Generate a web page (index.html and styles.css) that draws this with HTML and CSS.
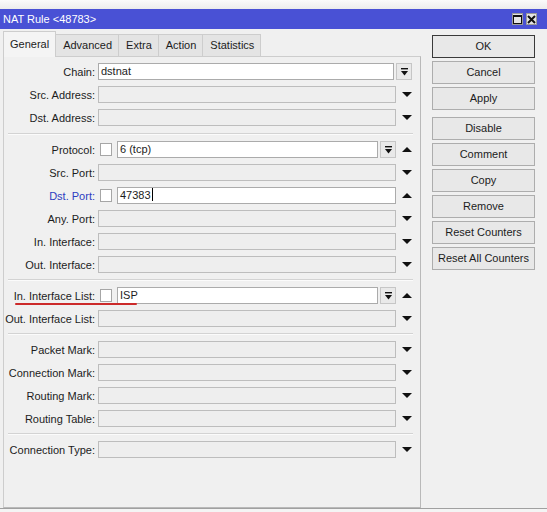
FILE: index.html
```html
<!DOCTYPE html>
<html>
<head>
<meta charset="utf-8">
<link rel="stylesheet" href="styles.css">
</head>
<body>
<div class="window">
  <div class="topstrip"></div>
  <div class="titlebar">
    <span class="title">NAT Rule &lt;48783&gt;</span>
    <div class="winbtns">
      <span class="winbtn"><svg width="9" height="9" viewBox="0 0 9 9"><rect x="0.5" y="0.5" width="8" height="8" fill="none" stroke="#111" stroke-width="1"/><rect x="0" y="0" width="9" height="2" fill="#111"/></svg></span>
      <span class="winbtn"><svg width="9" height="9" viewBox="0 0 9 9"><path d="M1 1 L8 8 M8 1 L1 8" stroke="#111" stroke-width="2"/></svg></span>
    </div>
  </div>
  <div class="main">
    <div class="left">
      <div class="tabs">
        <div class="tab active">General</div>
        <div class="tab">Advanced</div>
        <div class="tab">Extra</div>
        <div class="tab">Action</div>
        <div class="tab">Statistics</div>
      </div>
      <div class="panel">
        <div class="row no-trail">
          <span class="lbl">Chain:</span>
          <div class="field"><div class="input filled">dstnat</div><span class="dd"><svg width="7" height="8" viewBox="0 0 7 8"><rect x="0" y="0" width="7" height="1.4" fill="#111"/><polygon points="0,3 7,3 3.5,7.5" fill="#111"/></svg></span></div>
        </div>
        <div class="row">
          <span class="lbl">Src. Address:</span>
          <div class="field"><div class="input"></div></div>
          <span class="trail"><svg width="10" height="5" viewBox="0 0 10 5"><polygon points="0,0 10,0 5,5" fill="#111"/></svg></span>
        </div>
        <div class="row">
          <span class="lbl">Dst. Address:</span>
          <div class="field"><div class="input"></div></div>
          <span class="trail"><svg width="10" height="5" viewBox="0 0 10 5"><polygon points="0,0 10,0 5,5" fill="#111"/></svg></span>
        </div>
        <div class="sep first"></div>
        <div class="row">
          <span class="lbl">Protocol:</span>
          <div class="field"><span class="chk"></span><div class="input filled">6 (tcp)</div><span class="dd"><svg width="7" height="8" viewBox="0 0 7 8"><rect x="0" y="0" width="7" height="1.4" fill="#111"/><polygon points="0,3 7,3 3.5,7.5" fill="#111"/></svg></span></div>
          <span class="trail"><svg width="10" height="5" viewBox="0 0 10 5"><polygon points="0,5 10,5 5,0" fill="#111"/></svg></span>
        </div>
        <div class="row">
          <span class="lbl">Src. Port:</span>
          <div class="field"><div class="input"></div></div>
          <span class="trail"><svg width="10" height="5" viewBox="0 0 10 5"><polygon points="0,0 10,0 5,5" fill="#111"/></svg></span>
        </div>
        <div class="row">
          <span class="lbl blue">Dst. Port:</span>
          <div class="field"><span class="chk"></span><div class="input filled">47383<span class="caret"></span></div></div>
          <span class="trail"><svg width="10" height="5" viewBox="0 0 10 5"><polygon points="0,5 10,5 5,0" fill="#111"/></svg></span>
        </div>
        <div class="row">
          <span class="lbl">Any. Port:</span>
          <div class="field"><div class="input"></div></div>
          <span class="trail"><svg width="10" height="5" viewBox="0 0 10 5"><polygon points="0,0 10,0 5,5" fill="#111"/></svg></span>
        </div>
        <div class="row">
          <span class="lbl">In. Interface:</span>
          <div class="field"><div class="input"></div></div>
          <span class="trail"><svg width="10" height="5" viewBox="0 0 10 5"><polygon points="0,0 10,0 5,5" fill="#111"/></svg></span>
        </div>
        <div class="row">
          <span class="lbl">Out. Interface:</span>
          <div class="field"><div class="input"></div></div>
          <span class="trail"><svg width="10" height="5" viewBox="0 0 10 5"><polygon points="0,0 10,0 5,5" fill="#111"/></svg></span>
        </div>
        <div class="sep"></div>
        <div class="row marked">
          <span class="lbl">In. Interface List:</span>
          <div class="field"><span class="chk"></span><div class="input filled">ISP</div><span class="dd"><svg width="7" height="8" viewBox="0 0 7 8"><rect x="0" y="0" width="7" height="1.4" fill="#111"/><polygon points="0,3 7,3 3.5,7.5" fill="#111"/></svg></span></div>
          <span class="trail"><svg width="10" height="5" viewBox="0 0 10 5"><polygon points="0,5 10,5 5,0" fill="#111"/></svg></span>
          <span class="redmark"></span>
        </div>
        <div class="row">
          <span class="lbl">Out. Interface List:</span>
          <div class="field"><div class="input"></div></div>
          <span class="trail"><svg width="10" height="5" viewBox="0 0 10 5"><polygon points="0,0 10,0 5,5" fill="#111"/></svg></span>
        </div>
        <div class="sep"></div>
        <div class="row">
          <span class="lbl">Packet Mark:</span>
          <div class="field"><div class="input"></div></div>
          <span class="trail"><svg width="10" height="5" viewBox="0 0 10 5"><polygon points="0,0 10,0 5,5" fill="#111"/></svg></span>
        </div>
        <div class="row">
          <span class="lbl">Connection Mark:</span>
          <div class="field"><div class="input"></div></div>
          <span class="trail"><svg width="10" height="5" viewBox="0 0 10 5"><polygon points="0,0 10,0 5,5" fill="#111"/></svg></span>
        </div>
        <div class="row">
          <span class="lbl">Routing Mark:</span>
          <div class="field"><div class="input"></div></div>
          <span class="trail"><svg width="10" height="5" viewBox="0 0 10 5"><polygon points="0,0 10,0 5,5" fill="#111"/></svg></span>
        </div>
        <div class="row">
          <span class="lbl">Routing Table:</span>
          <div class="field"><div class="input"></div></div>
          <span class="trail"><svg width="10" height="5" viewBox="0 0 10 5"><polygon points="0,0 10,0 5,5" fill="#111"/></svg></span>
        </div>
        <div class="sep"></div>
        <div class="row">
          <span class="lbl">Connection Type:</span>
          <div class="field"><div class="input"></div></div>
          <span class="trail"><svg width="10" height="5" viewBox="0 0 10 5"><polygon points="0,0 10,0 5,5" fill="#111"/></svg></span>
        </div>
      </div>
    </div>
    <div class="buttons">
      <div class="btn default">OK</div>
      <div class="btn">Cancel</div>
      <div class="btn">Apply</div>
      <div class="btn gap">Disable</div>
      <div class="btn">Comment</div>
      <div class="btn">Copy</div>
      <div class="btn">Remove</div>
      <div class="btn">Reset Counters</div>
      <div class="btn">Reset All Counters</div>
    </div>
  </div>
  <div class="footer"></div>
</div>
</body>
</html>
```
FILE: styles.css
```css
html, body {
  margin: 0;
  padding: 0;
}
body {
  background: #f0f0f0;
  font-family: "Liberation Sans", Arial, sans-serif;
  font-size: 11px;
  color: #1c1c1c;
}
.window {
  width: 547px;
  height: 512px;
  display: flex;
  flex-direction: column;
  overflow: hidden;
}
.topstrip {
  height: 9px;
  background: linear-gradient(#fbfbfb, #ececec);
}
.titlebar {
  height: 20px;
  background: #4951d5;
  color: #fff;
  display: flex;
  align-items: center;
  justify-content: space-between;
  padding-left: 3px;
  padding-right: 10px;
}
.title {
  font-size: 11px;
}
.winbtns {
  display: flex;
  gap: 3px;
}
.winbtn {
  width: 11px;
  height: 12px;
  box-sizing: border-box;
  background: #e4e4e4;
  border: 1px solid #9a9a9a;
  display: flex;
  align-items: center;
  justify-content: center;
}
.main {
  height: 479px;
  display: flex;
  padding-left: 3px;
}
.left {
  width: 418px;
  display: flex;
  flex-direction: column;
  padding-top: 2px;
}
.tabs {
  height: 25px;
  display: flex;
  align-items: flex-end;
  position: relative;
  z-index: 1;
}
.tab {
  height: 22px;
  line-height: 21px;
  padding: 0 6px 0 7px;
  box-sizing: border-box;
  border: 1px solid #cdcdcd;
  border-bottom: none;
  border-left: none;
  background: #e4e4e4;
  white-space: nowrap;
}
.tab.active {
  height: 26px;
  line-height: 24px;
  margin-bottom: -1px;
  background: #f4f4f4;
  border-left: 1px solid #cdcdcd;
  padding: 0 6px;
}
.panel {
  flex: 1;
  border: 1px solid #cdcdcd;
  border-right-color: #b9b9b9;
  border-bottom-color: #b9b9b9;
  background: #f0f0f0;
  padding: 3px 2px 0 0;
}
.row {
  height: 23px;
  display: flex;
  align-items: center;
  position: relative;
}
.lbl {
  width: 91px;
  margin-right: 3px;
  text-align: right;
  white-space: nowrap;
  flex: none;
}
.lbl.blue {
  color: #2d3cc0;
}
.field {
  flex: 1;
  display: flex;
  align-items: center;
  min-width: 0;
}
.row.no-trail .field {
  margin-right: 6px;
}
.input {
  flex: 1;
  height: 17px;
  box-sizing: border-box;
  border: 1px solid #bdbdbd;
  background: #eeeeee;
  padding: 0 2px;
  line-height: 15px;
  white-space: nowrap;
}
.input.filled {
  background: #ffffff;
  border-color: #ababab;
}
.caret {
  display: inline-block;
  width: 1px;
  height: 13px;
  background: #000;
  vertical-align: -2px;
  margin-left: 1px;
}
.chk {
  width: 12px;
  height: 13px;
  box-sizing: border-box;
  border: 1px solid #a6a6a6;
  background: #fff;
  margin: 0 5px 0 2px;
  flex: none;
}
.dd {
  width: 16px;
  height: 17px;
  box-sizing: border-box;
  margin-left: 2px;
  border: 1px solid #c6c6c6;
  background: #e9e9e9;
  display: flex;
  align-items: center;
  justify-content: center;
  flex: none;
}
.trail {
  width: 22px;
  display: flex;
  justify-content: center;
  align-items: center;
  flex: none;
}
.sep {
  height: 1px;
  background: #d3d3d3;
  border-bottom: 1px solid #fbfbfb;
  margin: 3px 5px 3px 4px;
}
.sep.first {
  margin-top: 4px;
}
.redmark {
  position: absolute;
  left: 11px;
  top: 19px;
  width: 122px;
  height: 2px;
  background: #cc2a2a;
  border-radius: 2px;
}
.buttons {
  width: 103px;
  margin-left: 11px;
  padding-top: 6px;
  display: flex;
  flex-direction: column;
  gap: 3px;
}
.btn {
  height: 23px;
  box-sizing: border-box;
  border: 1px solid #adadad;
  background: #e8e8e8;
  text-align: center;
  line-height: 21px;
  white-space: nowrap;
}
.btn.default {
  border-color: #3a3a3a;
}
.btn.gap {
  margin-top: 4px;
}
.footer {
  flex: 1;
  border-top: 1px solid #a0a0a0;
  background: #f4f4f4;
}
```
